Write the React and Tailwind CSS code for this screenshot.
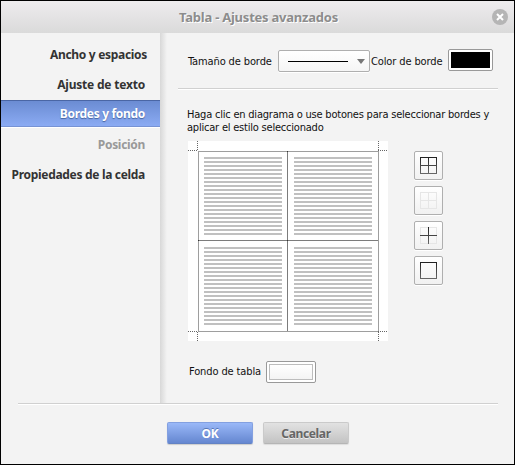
const rows = Array.from({ length: 20 }, (_, i) => i * 4);

const cells = [
  [16, 16],
  [106, 16],
  [16, 106],
  [106, 106],
];

function Diagram() {
  return (
    <svg width="200" height="200" className="block bg-white" shapeRendering="crispEdges">
      {cells.map(([x, y]) =>
        rows.map((r) => <rect key={`${x}-${y}-${r}`} x={x} y={y + r} width="78" height="2" fill="#c0c0c0" />)
      )}
      <rect x="10.5" y="10.5" width="180" height="180" fill="none" stroke="#9e9e9e" />
      <path d="M99.500 11V190M10 99.500H190" stroke="#7c7c7c" />
      <path d="M10 99.500h1M99 99.500h1M99 10.500h1" stroke="#333" />
      <path
        d="M0 9.500H10M9.500 0V10M190.500 0V10M190 9.500H200M0 190.500H10M9.500 191V200M190 190.500H200M190.500 191V200"
        stroke="#666"
        strokeDasharray="1 1"
      />
    </svg>
  );
}

function BorderIcon({ id, outer, inner }) {
  const paint = (on) => (on ? `url(#${id})` : "#e6e6e6");
  return (
    <svg width="17" height="17" shapeRendering="crispEdges">
      <defs>
        <linearGradient id={id} gradientUnits="userSpaceOnUse" x1="0" y1="0" x2="0" y2="17">
          <stop stopColor="#202020" />
          <stop offset="1" stopColor="#686868" />
        </linearGradient>
      </defs>
      {outer !== null && <path d="M0 0H17V17H0ZM1 1V16H16V1Z" fillRule="evenodd" fill={paint(outer)} />}
      {inner !== null && <path d="M8 0H9V8H17V9H9V17H8V9H0V8H8Z" fill={paint(inner)} />}
    </svg>
  );
}

function IconButton({ children }) {
  return (
    <button className="flex h-[29px] w-[29px] items-center justify-center rounded-[2px] border border-[#afafaf] bg-linear-to-b from-white to-[#f1f1f1] shadow-[0_1px_0_#fff]">
      {children}
    </button>
  );
}

export default function App() {
  return (
    <div className="flex h-[465px] w-[515px] flex-col border border-black bg-[#f3f3f3] font-['DejaVu_Sans_Condensed','DejaVu_Sans',sans-serif] text-[11px] leading-[13px] tracking-[-0.12px] text-[#111] [font-stretch:condensed]">
      <header className="flex h-8 shrink-0 items-center bg-linear-to-b from-[#eeecee] to-[#dadada] pr-[6px] pl-[178px]">
        <h1 className="whitespace-nowrap font-['Noto_Sans',sans-serif] text-[13px] font-bold tracking-[-0.23px] text-[#8c8c8c] [font-stretch:normal] [text-shadow:1px_1px_0_#fff]">
          Tabla - Ajustes avanzados
        </h1>
        <button className="ml-auto flex h-4 w-4 items-center justify-center rounded-full bg-[#b5b5b5]">
          <svg width="8" height="8" stroke="#fff" strokeWidth="2">
            <path d="M1 1L7 7M7 1L1 7" />
          </svg>
        </button>
      </header>
      <div className="flex h-[370px] shrink-0">
        <nav className="flex w-[159px] shrink-0 flex-col whitespace-nowrap pt-[6px] text-right font-['Noto_Sans',sans-serif] text-[12px] font-bold tracking-[-0.31px] text-[#333] [font-stretch:normal]">
          <div className="flex h-[30px] items-center justify-end pr-[13px]">Ancho y espacios</div>
          <div className="flex h-[30px] items-center justify-end pr-[15px] tracking-[-0.2px]">Ajuste de texto</div>
          <div className="mt-px mb-[2px] flex h-[27px] items-center justify-end border-t border-b border-t-[#4a66a5] border-b-[#7793d4] bg-linear-to-b from-[#6b8cd3] to-[#8babf3] pr-[15px] text-white shadow-[0_1px_0_#fff] [text-shadow:0_1px_1px_#45639f]">
            Bordes y fondo
          </div>
          <div className="flex h-[30px] items-center justify-end pr-[15px] text-[#999]">Posición</div>
          <div className="flex h-[30px] items-center justify-end pr-[15px]">Propiedades de la celda</div>
        </nav>
        <div className="w-[7px] shrink-0 bg-linear-to-r from-[#d8d8d8] to-[#f3f3f3]" />
        <main className="w-[346px] pl-[11px]">
          <div className="flex h-[55px] items-start whitespace-nowrap pl-[10px] pt-[16px]">
            <span className="mt-[6px] w-[90px]">Tamaño de borde</span>
            <div className="mt-[1px] flex h-[22px] w-[92px] items-center rounded-[2px] border border-[#afafaf] bg-linear-to-b from-white to-[#f5f5f5] pl-[9px] shadow-[0_1px_0_#fff]">
              <div className="h-px w-[60px] bg-black" />
              <svg className="ml-[9px]" width="8" height="5">
                <path d="M0 0H8L4 5Z" fill="#777" />
              </svg>
            </div>
            <span className="mt-[6px] w-[78px] pl-px">Color de borde</span>
            <div className="h-[22px] w-[45px] rounded-[2px] border border-[#999] bg-white p-[2px]">
              <div className="h-4 bg-black" />
            </div>
          </div>
          <div className="h-[2px] w-[320px] border-b border-white bg-[#d0d0d0]" />
          <p className="mt-[18px] mb-px ml-[9px] whitespace-nowrap tracking-[-0.21px]">
            Haga clic en diagrama o use botones para seleccionar bordes y<br />
            aplicar el estilo seleccionado
          </p>
          <div className="mt-[7px] ml-[10px] flex">
            <Diagram />
            <div className="mt-[10px] ml-[26px] flex flex-col gap-[6px]">
              <IconButton><BorderIcon id="all" outer={true} inner={true} /></IconButton>
              <IconButton><BorderIcon id="none" outer={false} inner={false} /></IconButton>
              <IconButton><BorderIcon id="inner" outer={false} inner={true} /></IconButton>
              <IconButton><BorderIcon id="outer" outer={true} inner={null} /></IconButton>
            </div>
          </div>
          <div className="mt-[20px] ml-[11px] flex whitespace-nowrap">
            <span className="mt-[4px] w-[77px]">Fondo de tabla</span>
            <div className="h-[22px] w-[50px] rounded-[2px] border border-[#999] bg-white p-[2px]">
              <div className="h-4 border border-[#bdbdbd] bg-linear-to-b from-white to-[#f4f4f4]" />
            </div>
          </div>
        </main>
      </div>
      <footer className="px-[17px]">
        <div className="h-[2px] w-[480px] border-b border-white bg-[#d0d0d0]" />
        <div className="mt-[17px] ml-[149px] flex gap-[10px] font-['Noto_Sans',sans-serif] text-[12px] font-bold tracking-[-0.35px] [font-stretch:normal]">
          <button className="h-[22px] w-[86px] rounded-[2px] border border-[#83a0e0] border-b-[#6282c4] bg-linear-to-b from-[#9ab8f8] to-[#6587d0] text-white shadow-[0_1px_1px_#ccc] [text-shadow:0_-1px_0_#5676b8]">
            OK
          </button>
          <button className="h-[22px] w-[86px] rounded-[2px] border border-[#cacaca] border-b-[#b5b5b5] bg-linear-to-b from-[#e2e2e2] to-[#c3c3c3] text-[#666] shadow-[0_1px_1px_#ddd] [text-shadow:0_1px_0_#eee]">
            Cancelar
          </button>
        </div>
      </footer>
    </div>
  );
}
